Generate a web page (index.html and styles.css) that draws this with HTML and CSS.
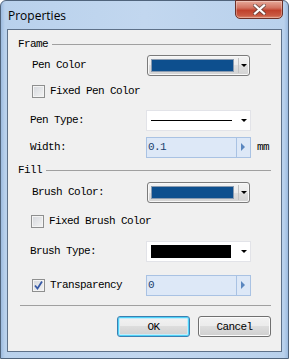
FILE: index.html
```html
<!DOCTYPE html>
<html lang="en">

<head>
    <meta charset="UTF-8">
    <title>Properties</title>
    <link rel="stylesheet" href="styles.css">
</head>

<body>
    <div class="window">
        <div class="titlebar">
            <span class="title">Properties</span>
            <button class="close">
                <svg width="13" height="11" viewBox="0 0 13 11">
                    <path d="M2 1.5 L11 9.5 M11 1.5 L2 9.5" stroke="#3a3a3a" stroke-width="4" stroke-linecap="square" opacity="0.55"/>
                    <path d="M2 1.5 L11 9.5 M11 1.5 L2 9.5" stroke="#fff" stroke-width="2.2" stroke-linecap="square"/>
                </svg>
            </button>
        </div>

        <div class="client">
            <!-- Frame -->
            <div class="group-head">
                <span>Frame</span>
                <span class="rule"></span>
            </div>
            <div class="row r-pencolor">
                <span class="label in2">Pen Color</span>
                <div class="combo color">
                    <span class="swatch"></span>
                    <span class="drop"><i class="down"></i></span>
                </div>
            </div>
            <div class="row r-fixedpen">
                <span class="check"></span>
                <span class="check-text">Fixed Pen Color</span>
            </div>
            <div class="row r-pentype">
                <span class="label">Pen Type:</span>
                <div class="combo plain">
                    <span class="line"></span>
                    <span class="drop"><i class="down"></i></span>
                </div>
            </div>
            <div class="row r-width">
                <span class="label">Width:</span>
                <div class="spin">
                    <span class="value">0.1</span>
                    <span class="spin-btn"><i class="right"></i></span>
                </div>
                <span class="unit">mm</span>
            </div>

            <!-- Fill -->
            <div class="group-head r-fill">
                <span>Fill</span>
                <span class="rule"></span>
            </div>
            <div class="row r-brushcolor">
                <span class="label in2">Brush Color:</span>
                <div class="combo color">
                    <span class="swatch"></span>
                    <span class="drop"><i class="down"></i></span>
                </div>
            </div>
            <div class="row r-fixedbrush">
                <span class="check tight"></span>
                <span class="check-text">Fixed Brush Color</span>
            </div>
            <div class="row r-brushtype">
                <span class="label">Brush Type:</span>
                <div class="combo plain">
                    <span class="fillbox"></span>
                    <span class="drop"><i class="down"></i></span>
                </div>
            </div>
            <div class="row r-transp">
                <div class="label check-label">
                    <span class="check on">
                        <svg width="11" height="11" viewBox="0 0 11 11">
                            <path d="M2 5.5 L4.5 8.5 L9 1.5" fill="none" stroke="#3659a6" stroke-width="1.8"/>
                        </svg>
                    </span>
                    <span class="check-text">Transparency</span>
                </div>
                <div class="spin">
                    <span class="value">0</span>
                    <span class="spin-btn"><i class="right"></i></span>
                </div>
            </div>

            <div class="sep"></div>

            <div class="buttons">
                <button class="btn default">OK</button>
                <button class="btn">Cancel</button>
            </div>
        </div>
    </div>
</body>

</html>
```

FILE: styles.css
```css
/* General */
body {
    margin: 0;
    font-family: "Liberation Mono", "DejaVu Sans Mono", monospace;
    font-size: 11px;
    letter-spacing: -0.6px;
    color: #000;
}

/* Window frame */
.window {
    width: 289px;
    height: 359px;
    box-sizing: border-box;
    border: 1px solid #50647c;
    border-radius: 6px 6px 0 0;
    background: linear-gradient(90deg, #9dbbdf 0px, #b9d1ec 4px, #c2d7ef 50%, #b9d1ec calc(100% - 4px), #9dbbdf 100%);
    padding: 0 6px 6px;
    display: flex;
    flex-direction: column;
}

.titlebar {
    height: 28px;
    display: flex;
    justify-content: space-between;
    align-items: flex-start;
}

.title {
    font-family: "Open Sans", "Noto Sans", sans-serif;
    font-size: 12px;
    letter-spacing: 0;
    margin: 6px 0 0 1px;
}

.close {
    width: 48px;
    height: 19px;
    margin: -1px -1px 0 0;
    padding: 0;
    border: 1px solid #6d3128;
    border-radius: 0 0 5px 5px;
    background: linear-gradient(#e7a999, #d27361 40%, #c0412c 55%, #c95a43 85%, #de8c70);
    box-shadow: inset 0 0 0 1px rgba(255, 255, 255, 0.3);
    display: flex;
    align-items: center;
    justify-content: center;
}

/* Client area */
.client {
    flex: 1;
    border: 1px solid #5e7189;
    background: #f0f0f0;
    padding: 6px 10px 0;
    display: flex;
    flex-direction: column;
}

.group-head {
    height: 16px;
    display: flex;
    align-items: center;
    gap: 4px;
}

.group-head .rule {
    flex: 1;
    border-top: 1px solid #a0a0a0;
    margin-top: 1px;
}

.row {
    height: 22px;
    display: flex;
    align-items: center;
}

.r-pencolor { margin-top: 2px; }
.r-fixedpen { margin-top: 4px; }
.r-pentype { margin-top: 7px; }
.r-width { margin-top: 5px; }
.r-fill { margin-top: 4px; }
.r-brushcolor { margin-top: 3px; }
.r-fixedbrush { margin-top: 7px; }
.r-brushtype { margin-top: 8px; }
.r-transp { margin-top: 12px; }

.label {
    width: 128px;
    padding-left: 12px;
    box-sizing: border-box;
    flex-shrink: 0;
}

.label.in2 {
    padding-left: 14px;
}

.check-label {
    display: flex;
    align-items: center;
    padding-left: 14px;
}

/* Checkboxes */
.check {
    width: 13px;
    height: 13px;
    box-sizing: border-box;
    border: 1px solid #8e8f8f;
    background: linear-gradient(135deg, #d4d7dc, #f4f4f4);
    box-shadow: inset 0 0 0 1px #f4f4f4;
    margin-left: 14px;
    display: flex;
    align-items: center;
    justify-content: center;
    flex-shrink: 0;
}

.check.tight {
    margin-left: 13px;
}

.check-label .check {
    margin-left: 0;
}

.check-text {
    margin-left: 5px;
}

/* Combo boxes */
.combo {
    width: 105px;
    height: 21px;
    box-sizing: border-box;
    display: flex;
    align-items: center;
}

.combo.color {
    width: 103px;
    margin-left: 1px;
    border: 1px solid #7b7b7b;
    border-radius: 3px;
    background: linear-gradient(#f3f3f3, #ebebeb 50%, #dedede 50%, #d3d3d3);
    box-shadow: inset 0 0 0 1px #f8f8f8;
    padding-left: 3px;
}

.swatch {
    width: 83px;
    height: 13px;
    box-sizing: border-box;
    background: #0d4f8e;
    border: 1px solid #8a9bb0;
}

.combo.plain {
    border: 1px solid #e2e3e8;
    background: #fff;
    padding-left: 4px;
}

.line {
    width: 81px;
    border-top: 1px solid #000;
}

.fillbox {
    width: 80px;
    height: 13px;
    background: #000;
}

.drop {
    flex: 1;
    align-self: stretch;
    display: flex;
    align-items: center;
    justify-content: center;
}

.combo.color .drop {
    margin: 2px 0 2px 4px;
    border-left: 1px solid #c2c2c2;
}

.combo.plain .drop {
    padding-left: 6px;
}

.down {
    width: 0;
    height: 0;
    border-left: 3px solid transparent;
    border-right: 3px solid transparent;
    border-top: 3px solid #000;
    margin-top: 1px;
}

/* Spin edits */
.spin {
    width: 105px;
    height: 21px;
    box-sizing: border-box;
    border: 1px solid #a9c2e3;
    background: #dde8f7;
    display: flex;
    align-items: center;
}

.value {
    flex: 1;
    padding-left: 1px;
    color: #203f6e;
}

.spin-btn {
    width: 13px;
    align-self: stretch;
    border-left: 1px solid #a9c2e3;
    display: flex;
    align-items: center;
    justify-content: center;
}

.right {
    width: 0;
    height: 0;
    border-top: 4px solid transparent;
    border-bottom: 4px solid transparent;
    border-left: 4px solid #5b87c0;
    margin-right: 1px;
}

.unit {
    margin-left: 6px;
}

/* Bottom */
.sep {
    margin: 9px 0 0 2px;
    border-top: 1px solid #a0a0a0;
}

.buttons {
    margin-top: 10px;
    display: flex;
    justify-content: flex-end;
    gap: 8px;
}

.btn {
    width: 73px;
    height: 21px;
    padding: 0;
    font-family: inherit;
    font-size: 11px;
    letter-spacing: -0.6px;
    color: #000;
    border: 1px solid #707070;
    border-radius: 3px;
    background: linear-gradient(#f2f2f2, #ebebeb 50%, #dddddd 50%, #cfcfcf);
    box-shadow: inset 0 0 0 1px #fbfbfb;
}

.btn.default {
    border-color: #3c7fb1;
    box-shadow: inset 0 0 0 1px #4fd3f8, inset 0 0 0 2px #c4ecfb;
}
```
